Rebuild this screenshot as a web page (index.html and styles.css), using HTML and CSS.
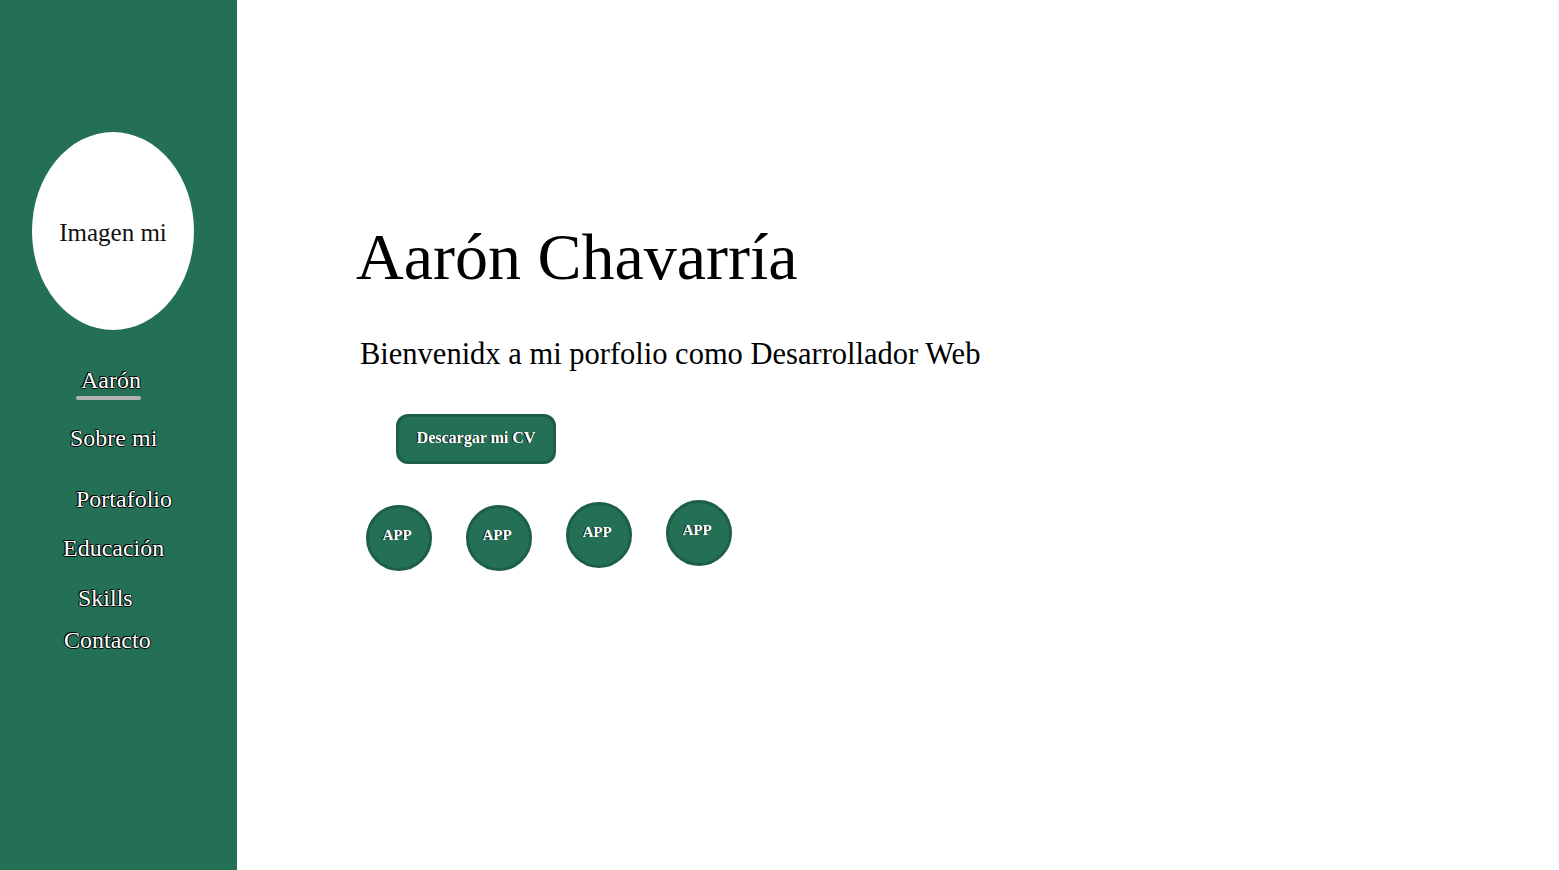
FILE: index.html
```html
<!DOCTYPE html>
<html lang="es">
<head>
<meta charset="utf-8">
<title>Aarón Chavarría</title>
<link rel="stylesheet" href="styles.css">
</head>
<body>
<div class="page">
  <aside class="sidebar">
    <div class="avatar">Imagen mi</div>
    <nav class="nav">
      <a class="nav-link nav-active n1" href="#">Aarón</a>
      <a class="nav-link n2" href="#">Sobre mi</a>
      <a class="nav-link n3" href="#">Portafolio</a>
      <a class="nav-link n4" href="#">Educación</a>
      <a class="nav-link n5" href="#">Skills</a>
      <a class="nav-link n6" href="#">Contacto</a>
    </nav>
  </aside>
  <main class="main">
    <h1 class="title">Aarón Chavarría</h1>
    <p class="subtitle">Bienvenidx a mi porfolio como Desarrollador Web</p>
    <a class="cv-btn" href="#">Descargar mi CV</a>
    <div class="apps">
      <div class="app a1">APP</div>
      <div class="app a2">APP</div>
      <div class="app a3">APP</div>
      <div class="app a4">APP</div>
    </div>
  </main>
</div>
</body>
</html>
```
FILE: styles.css
```css
html, body {
  margin: 0;
  padding: 0;
  background: #fff;
}
.page {
  display: flex;
  width: 1559px;
  height: 870px;
}
.sidebar {
  width: 237px;
  flex: none;
  background: #247056;
  display: flex;
  flex-direction: column;
  align-items: flex-start;
}
.avatar {
  margin: 132px 0 0 32px;
  width: 162px;
  height: 198px;
  border-radius: 50%;
  background: #fff;
  display: flex;
  align-items: center;
  justify-content: center;
  font-family: "Liberation Serif", serif;
  font-size: 25px;
  padding-top: 4px;
  box-sizing: border-box;
  color: #111;
}
.nav {
  display: flex;
  flex-direction: column;
  align-items: flex-start;
  font-family: "Liberation Serif", serif;
  font-size: 24px;
}
.nav-link {
  color: #fff;
  text-decoration: none;
  text-shadow: -1px 0 0 #000, 1px 0 0 #000, -1px -1px 0 #000, 0 1px 0 #000;
  line-height: 28px;
}
.n1 { margin: 36px 0 0 81px; position: relative; }
.nav-active::after {
  content: "";
  position: absolute;
  left: -5px;
  right: 0;
  bottom: -6px;
  height: 4px;
  border-radius: 2px;
  background: #b3b3b3;
}
.n2 { margin: 30px 0 0 70px; }
.n3 { margin: 33px 0 0 76px; }
.n4 { margin: 21px 0 0 63px; }
.n5 { margin: 22px 0 0 78px; }
.n6 { margin: 14px 0 0 64px; }
.main {
  flex: 1;
  padding: 220px 0 0 119px;
  display: flex;
  flex-direction: column;
  align-items: flex-start;
  font-family: "Liberation Serif", serif;
}
.title {
  margin: 0;
  font-weight: normal;
  font-size: 66px;
  line-height: 74px;
  color: #000;
}
.subtitle {
  margin: 43px 0 0 4px;
  font-size: 30.5px;
  line-height: 34px;
  color: #000;
}
.cv-btn {
  margin: 43px 0 0 40px;
  width: 154px;
  height: 42px;
  box-sizing: content-box;
  border: 3px solid #1c5e47;
  border-radius: 12px;
  background: #247056;
  color: #fff;
  text-decoration: none;
  font-size: 16px;
  font-weight: bold;
  text-shadow: -1px 0 0 #000;
  display: flex;
  align-items: center;
  justify-content: center;
  padding-bottom: 2px;
}
.apps {
  margin: 36px 0 0 10px;
  display: flex;
  gap: 34px;
  align-items: flex-start;
}
.app {
  width: 66px;
  height: 66px;
  box-sizing: border-box;
  border: 3px solid #1c5e47;
  border-radius: 50%;
  background: #247056;
  color: #fff;
  font-size: 15px;
  font-weight: bold;
  text-shadow: -1px 0 0 #000;
  display: flex;
  align-items: center;
  justify-content: center;
  padding: 0 4px 5px 0;
}
.a1 { margin-top: 5px; }
.a2 { margin-top: 5px; }
.a3 { margin-top: 2px; }
.a4 { margin-top: 0; }
```
